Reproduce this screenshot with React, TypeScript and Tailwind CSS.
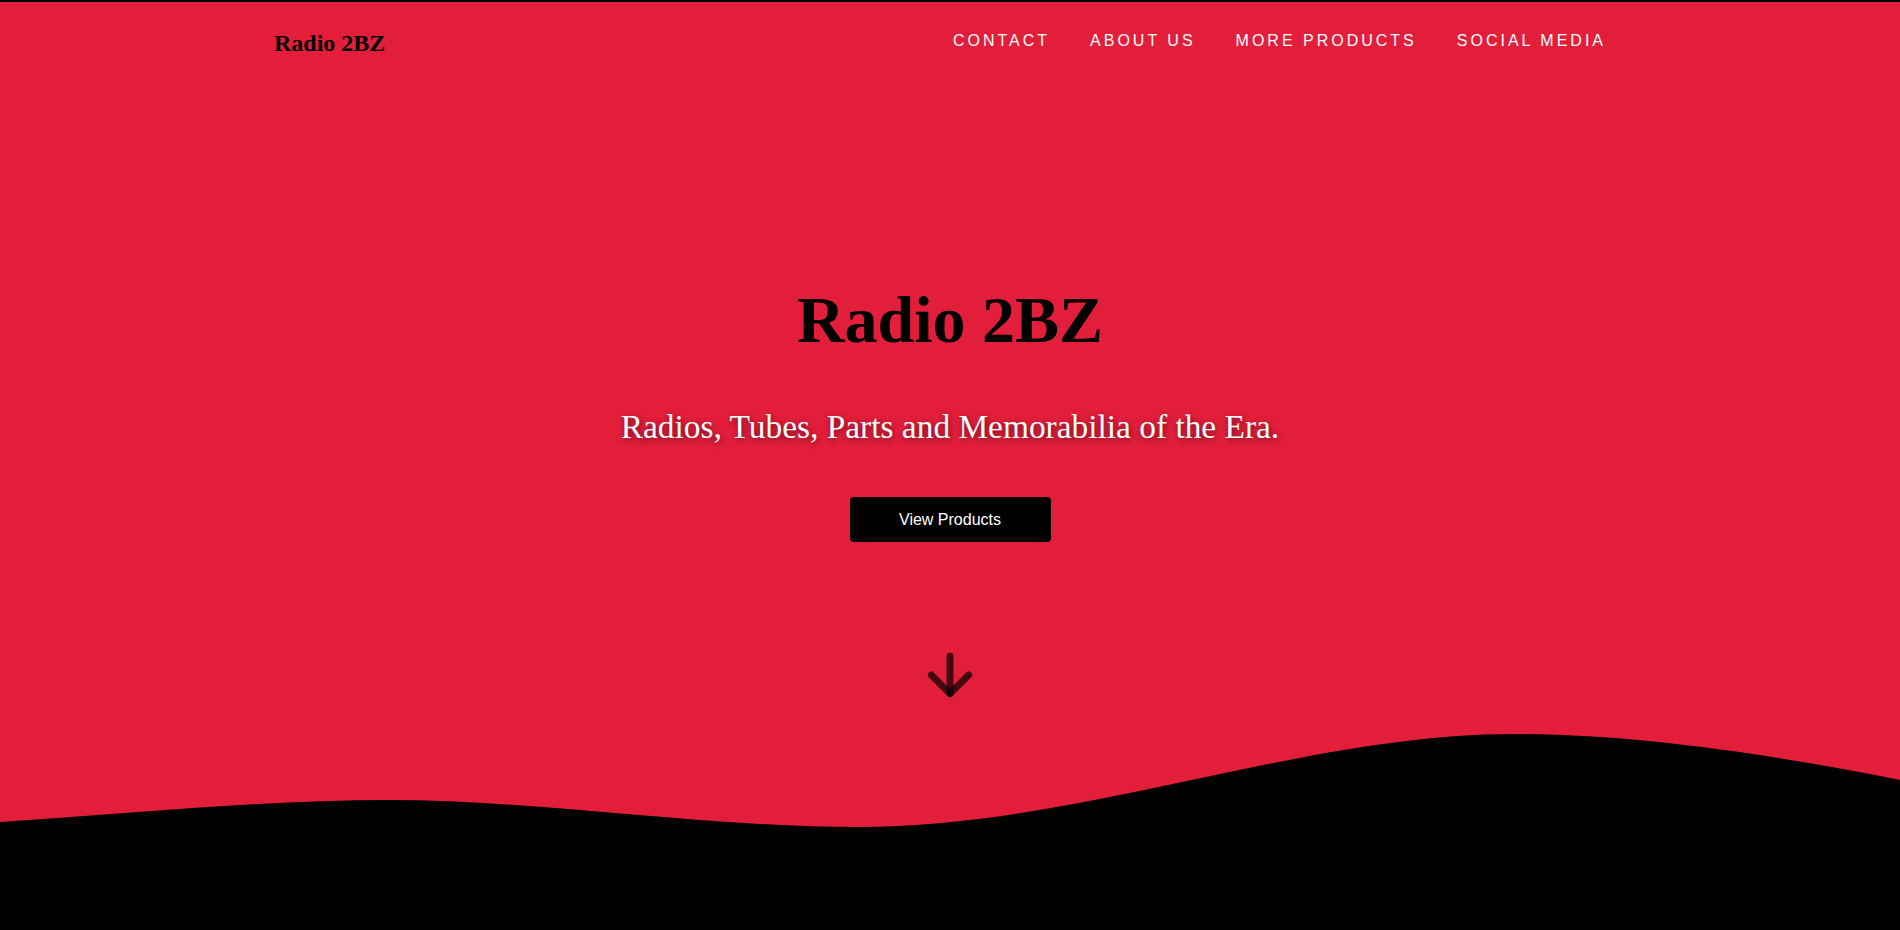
import { ArrowDown } from 'lucide-react';

const links = ['Contact', 'About Us', 'More Products', 'Social Media'];

export default function App() {
  return (
    <div className="min-h-screen bg-[#e31e3b] flex flex-col overflow-hidden">
      <div className="h-[2px] bg-black" />

      <nav className="w-[1352px] mx-auto pt-[27px] flex items-start justify-between">
        <a
          href="#"
          className="text-[24px] leading-[28px] font-bold text-black font-['Liberation_Serif',serif]"
        >
          Radio 2BZ
        </a>
        <ul className="flex mt-[3px]">
          {links.map((l) => (
            <li key={l}>
              <a
                href="#"
                className="block px-5 text-[16px] leading-[18px] uppercase tracking-[3px] text-white font-['Liberation_Sans',Arial,sans-serif]"
              >
                {l}
              </a>
            </li>
          ))}
        </ul>
      </nav>

      <main className="flex flex-col items-center text-center">
        <h1 className="mt-[230px] text-[66px] leading-[66px] font-bold text-black font-['Liberation_Serif',serif]">
          Radio 2BZ
        </h1>
        <p className="mt-[54px] text-[33.4px] leading-[40px] text-white font-['Liberation_Serif',serif] [text-shadow:1px_2px_6px_rgba(0,0,0,0.55)]">
          Radios, Tubes, Parts and Memorabilia of the Era.
        </p>
        <button className="mt-[50px] w-[201px] h-[45px] rounded-[4px] bg-black text-white text-[16px] font-['Liberation_Sans',Arial,sans-serif]">
          View Products
        </button>
        <ArrowDown className="mt-[101px] text-black/70" size={64} strokeWidth={2.6} />
      </main>

      <svg
        className="block w-full h-[200px] mt-[23px]"
        viewBox="0 0 1900 200"
        preserveAspectRatio="none"
      >
        <path
          fill="#000"
          d="M0,92 C130,84 260,70 388,70 C540,70 700,97 860,97 C1080,97 1300,4 1515,4 C1650,4 1800,30 1900,50 L1900,200 L0,200 Z"
        />
      </svg>
    </div>
  );
}
